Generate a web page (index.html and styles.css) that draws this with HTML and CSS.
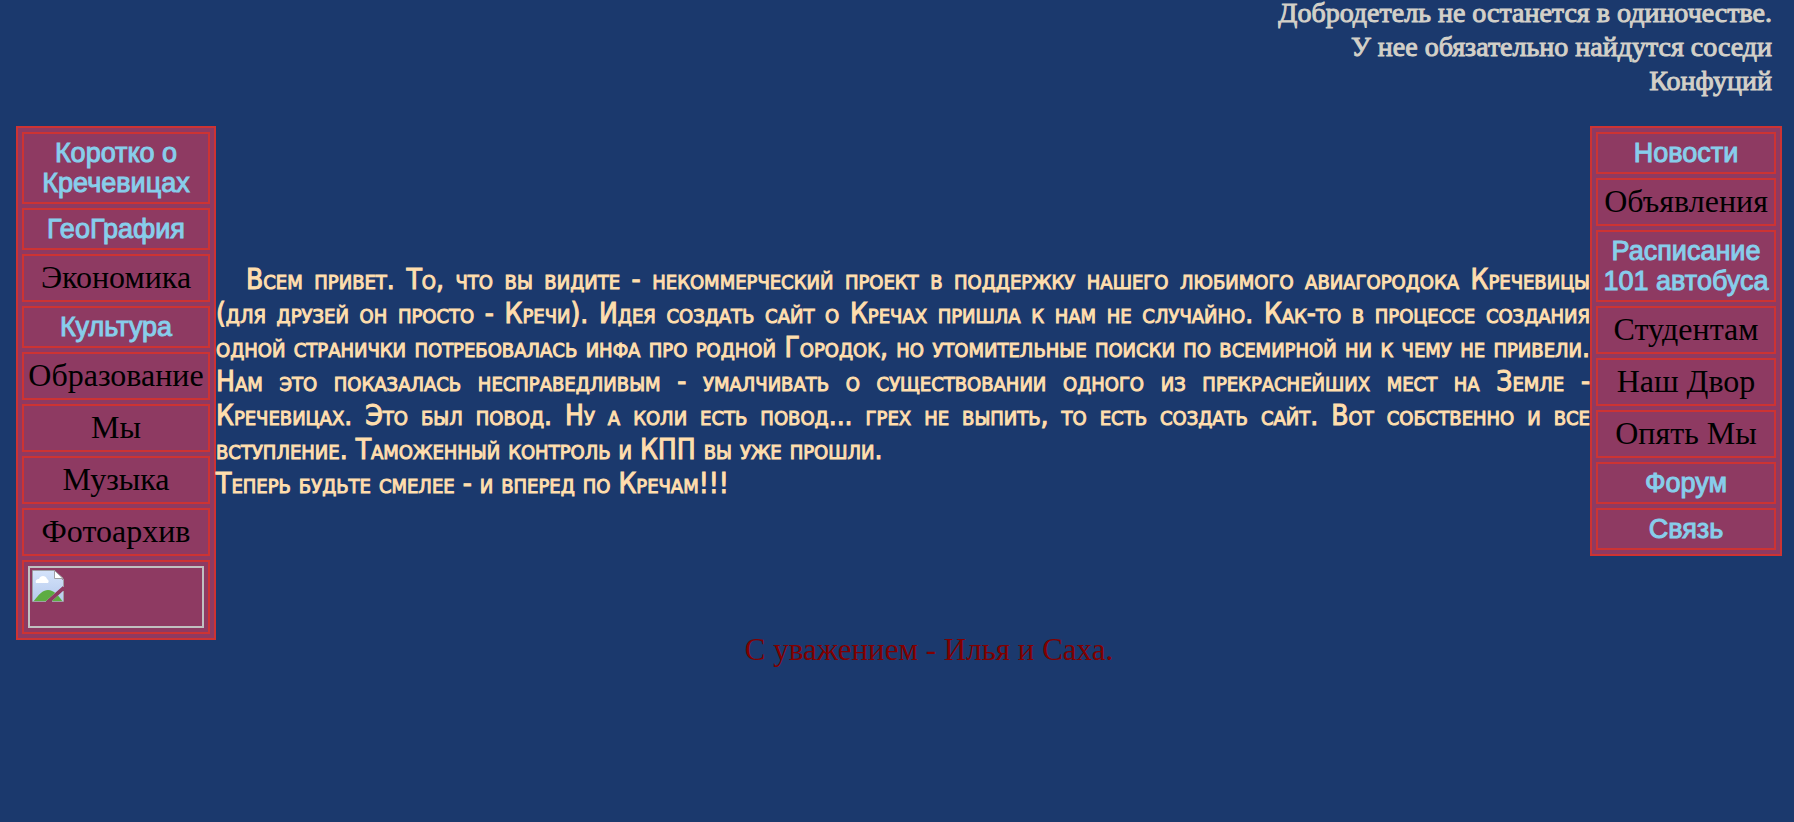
FILE: index.html
```html
<!DOCTYPE html>
<html lang="ru">
<head>
<meta charset="utf-8">
<title>Кречевицы</title>
<link rel="stylesheet" href="styles.css">
</head>
<body>
<blockquote class="quote">Добродетель не останется в одиночестве.<br>У нее обязательно найдутся соседи<br>Конфуций</blockquote>
<div class="columns">
  <nav class="menu menu-left" aria-label="О городке">
    <a class="item link" href="#about">Коротко о Кречевицах</a>
    <a class="item link" href="#geo">ГеоГрафия</a>
    <span class="item">Экономика</span>
    <a class="item link" href="#culture">Культура</a>
    <span class="item">Образование</span>
    <span class="item">Мы</span>
    <span class="item">Музыка</span>
    <span class="item">Фотоархив</span>
    <span class="item picture">
      <span class="banner">
        <svg width="32" height="32" viewBox="0 0 32 32" aria-hidden="true">
          <defs>
            <linearGradient id="sky" x1="0" y1="0" x2="0" y2="1"><stop offset="0" stop-color="#d5e3fa"/><stop offset="1" stop-color="#b5caed"/></linearGradient>
            <clipPath id="sheet"><path d="M1 1H22L31 10V16L14 31H1ZM31 21V31H20Z"/></clipPath>
          </defs>
          <g clip-path="url(#sheet)">
            <path fill="url(#sky)" d="M0 0H32V32H0Z"/>
            <path fill="#5dac42" d="M1 32C7 24 11 20 16 20C22 20 27 26 31 32Z"/>
            <path fill="#fff" d="M4 13C3 10 5 9 7 9C8 5 14 5 15 9C17 10 17 12 16 13Z"/>
          </g>
          <path fill="none" stroke="#a0a0a5" d="M14 31.5H.5V.5H22L31.500 9V17M31.500 21V31.500H20"/>
          <path fill="#fff" stroke="#a0a0a5" d="M22.500 .5V8.500H31Z"/>
        </svg>
      </span>
    </span>
  </nav>
  <main class="intro">
    <p class="text">Всем привет. То, что вы видите - некоммерческий проект в поддержку нашего любимого авиагородока Кречевицы (для друзей он просто - Кречи). Идея создать сайт о Кречах пришла к нам не случайно. Как-то в процессе создания одной странички потребовалась инфа про родной Городок, но утомительные поиски по всемирной ни к чему не привели. Нам это показалась несправедливым - умалчивать о существовании одного из прекраснейших мест на Земле - Кречевицах. Это был повод. Ну а коли есть повод... грех не выпить, то есть создать сайт. Вот собственно и все вступление. Таможенный контроль и КПП вы уже прошли.<br>Теперь будьте смелее - и вперед по Кречам!!!</p>
  </main>
  <nav class="menu menu-right" aria-label="Разделы">
    <a class="item link" href="#news">Новости</a>
    <span class="item">Объявления</span>
    <a class="item link" href="#bus">Расписание 101 автобуса</a>
    <span class="item">Студентам</span>
    <span class="item">Наш Двор</span>
    <span class="item">Опять Мы</span>
    <a class="item link" href="#forum">Форум</a>
    <a class="item link" href="#contact">Связь</a>
  </nav>
</div>
<footer class="sign">С уважением - Илья и Саха.</footer>
</body>
</html>
```
FILE: styles.css
```css
* { box-sizing: border-box; }
html { background: #1b396d; overflow: hidden; }
body {
  margin: 0;
  padding: 0 12px 0 16px;
  font-family: "Liberation Serif", "Times New Roman", serif;
  color: #000;
}
.quote {
  margin: -4px 10px 28px 0;
  text-align: right;
  font-size: 28px;
  line-height: 34px;
  color: #d3d0c8;
  -webkit-text-stroke: 1px #d3d0c8;
}
.columns { display: flex; align-items: flex-start; }
.menu {
  flex: none;
  display: flex;
  flex-direction: column;
  gap: 4px;
  padding: 4px;
  border: 2px solid #cd3333;
  background: #8e3a62;
}
.menu-left { width: 200px; }
.menu-right { width: 192px; }
.item {
  padding: 3px 4px 5px;
  border: 2px solid #cd3333;
  text-align: center;
  font-size: 32px;
  line-height: 36px;
}
.link {
  padding: 4px;
  font-family: "Liberation Sans", Arial, sans-serif;
  font-size: 27px;
  line-height: 30px;
  color: #87ceeb;
  text-decoration: none;
  -webkit-text-stroke: 1px #87ceeb;
}
.picture { padding: 4px; }
.banner {
  display: block;
  height: 62px;
  padding: 2px;
  border: 2px solid #c0c0c0;
}
.banner svg { display: block; }
.intro { flex: 1; min-width: 0; padding-top: 137px; }
.text {
  margin: 0;
  text-align: justify;
  text-indent: 30px;
  font-family: "DejaVu Sans Condensed", Tahoma, sans-serif;
  font-variant: small-caps;
  font-size: 28px;
  line-height: 34px;
  color: #ffdead;
  -webkit-text-stroke: 1px #ffdead;
}
.sign {
  margin-top: -8px;
  padding-left: 60px;
  text-align: center;
  font-size: 31px;
  line-height: 36px;
  color: #800000;
}
```
